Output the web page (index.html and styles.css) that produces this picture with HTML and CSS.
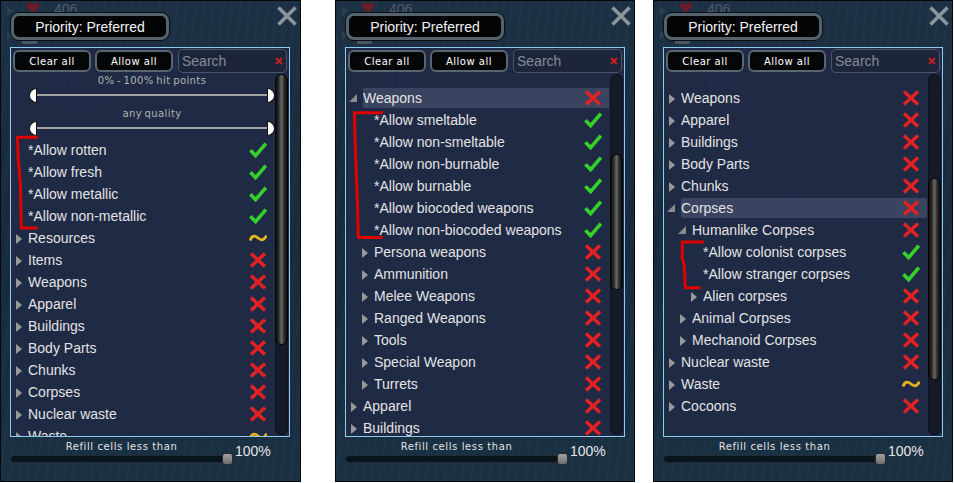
FILE: index.html
```html
<!DOCTYPE html>
<html lang="en">
<head>
<meta charset="utf-8">
<title>Storage filter</title>
<link rel="stylesheet" href="styles.css">
</head>
<body>
<svg class="defs" aria-hidden="true">
  <symbol id="ok" viewBox="0 0 18 16"><path d="M1.4 8.2 L6.6 13.6 L16.8 1.6" fill="none" stroke="#36d02c" stroke-width="3.6"/></symbol>
  <symbol id="no" viewBox="0 0 18 16"><path d="M2 1.5 L16 14.5 M16 1.5 L2 14.5" fill="none" stroke="#e22222" stroke-width="3.5"/></symbol>
  <symbol id="some" viewBox="0 0 18 16"><path d="M1 10.5 C3 5, 6 5.5, 9 8 S15 11, 17.5 5.5" fill="none" stroke="#e4b31e" stroke-width="2.8"/></symbol>
  <symbol id="closex" viewBox="0 0 20 20"><path d="M1.5 1.5 L18.5 18.5 M18.5 1.5 L1.5 18.5" fill="none" stroke="#8c949c" stroke-width="3.6"/></symbol>
  <symbol id="clr" viewBox="0 0 8 8"><path d="M1 1 L7 7 M7 1 L1 7" fill="none" stroke="#c51f1f" stroke-width="2"/></symbol>
  <symbol id="heart" viewBox="0 0 14 12"><path d="M7 11 L1.5 5.5 C-0.5 3 1.5 0 4 0.5 C5.5 0.8 6.5 2 7 3 C7.5 2 8.5 0.8 10 0.5 C12.5 0 14.5 3 12.5 5.5 Z" fill="#6b1c27"/></symbol>
</svg>

<div class="sheet">

  <!-- Panel 1 -->
  <section class="panel panel-1">
    <div class="ghost">
      <span class="g-tri g-tri-a"></span><span class="g-tri g-tri-b"></span>
      <svg class="g-heart"><use href="#heart"/></svg>
      <span class="g-num g-406">406</span>
      <span class="g-bar"></span>
      <span class="g-num g-1183">1183</span>
      <span class="g-num g-2708">270813</span>
    </div>
    <div class="header">
      <div class="priority">Priority: Preferred</div>
      <svg class="close"><use href="#closex"/></svg>
    </div>
    <div class="list">
      <div class="toolbar">
        <div class="btn">Clear all</div>
        <div class="btn">Allow all</div>
        <div class="search"><span class="ph">Search</span><svg class="clr"><use href="#clr"/></svg></div>
      </div>
      <div class="main">
        <div class="items">
          <div class="filter">
            <div class="cap">0% - 100% hit points</div>
            <div class="range"><span class="knob l"></span><span class="rail"></span><span class="knob r"></span></div>
            <div class="cap cap-2">any quality</div>
            <div class="range"><span class="knob l"></span><span class="rail"></span><span class="knob r"></span></div>
          </div>
          <div class="rows rows-p1">
            <div class="row"><span class="tri"></span><span class="body"><span class="label">*Allow rotten</span><svg class="ico"><use href="#ok"/></svg></span></div>
            <div class="row"><span class="tri"></span><span class="body"><span class="label">*Allow fresh</span><svg class="ico"><use href="#ok"/></svg></span></div>
            <div class="row"><span class="tri"></span><span class="body"><span class="label">*Allow metallic</span><svg class="ico"><use href="#ok"/></svg></span></div>
            <div class="row"><span class="tri"></span><span class="body"><span class="label">*Allow non-metallic</span><svg class="ico"><use href="#ok"/></svg></span></div>
            <div class="row"><span class="tri r"></span><span class="body"><span class="label">Resources</span><svg class="ico"><use href="#some"/></svg></span></div>
            <div class="row"><span class="tri r"></span><span class="body"><span class="label">Items</span><svg class="ico"><use href="#no"/></svg></span></div>
            <div class="row"><span class="tri r"></span><span class="body"><span class="label">Weapons</span><svg class="ico"><use href="#no"/></svg></span></div>
            <div class="row"><span class="tri r"></span><span class="body"><span class="label">Apparel</span><svg class="ico"><use href="#no"/></svg></span></div>
            <div class="row"><span class="tri r"></span><span class="body"><span class="label">Buildings</span><svg class="ico"><use href="#no"/></svg></span></div>
            <div class="row"><span class="tri r"></span><span class="body"><span class="label">Body Parts</span><svg class="ico"><use href="#no"/></svg></span></div>
            <div class="row"><span class="tri r"></span><span class="body"><span class="label">Chunks</span><svg class="ico"><use href="#no"/></svg></span></div>
            <div class="row"><span class="tri r"></span><span class="body"><span class="label">Corpses</span><svg class="ico"><use href="#no"/></svg></span></div>
            <div class="row"><span class="tri r"></span><span class="body"><span class="label">Nuclear waste</span><svg class="ico"><use href="#no"/></svg></span></div>
            <div class="row"><span class="tri r"></span><span class="body"><span class="label">Waste</span><svg class="ico"><use href="#some"/></svg></span></div>
          </div>
        </div>
        <div class="scroll"><div class="thumb thumb-p1"></div></div>
      </div>
    </div>
    <div class="footer">
      <div class="refill">
        <div class="cap cap-refill">Refill cells less than</div>
        <div class="track"><span class="handle"></span></div>
      </div>
      <div class="pct">100%</div>
    </div>
    <svg class="mark" viewBox="0 0 301 482"><polyline points="38,136.5 17.5,136.5 18.5,160 20.5,184 21.5,228 38,228" /></svg>
  </section>

  <!-- Panel 2 -->
  <section class="panel panel-2">
    <div class="ghost">
      <span class="g-tri g-tri-a"></span><span class="g-tri g-tri-b"></span>
      <svg class="g-heart"><use href="#heart"/></svg>
      <span class="g-num g-406">406</span>
      <span class="g-bar"></span>
      <span class="g-num g-1183">1183</span>
      <span class="g-num g-2708">270813</span>
    </div>
    <div class="header">
      <div class="priority">Priority: Preferred</div>
      <svg class="close"><use href="#closex"/></svg>
    </div>
    <div class="list">
      <div class="toolbar">
        <div class="btn">Clear all</div>
        <div class="btn">Allow all</div>
        <div class="search"><span class="ph">Search</span><svg class="clr"><use href="#clr"/></svg></div>
      </div>
      <div class="main">
        <div class="items">
          <div class="rows rows-scrolled">
            <div class="row hl"><span class="tri d"></span><span class="body"><span class="label">Weapons</span><svg class="ico"><use href="#no"/></svg></span></div>
            <div class="row d1"><span class="tri"></span><span class="body"><span class="label">*Allow smeltable</span><svg class="ico"><use href="#ok"/></svg></span></div>
            <div class="row d1"><span class="tri"></span><span class="body"><span class="label">*Allow non-smeltable</span><svg class="ico"><use href="#ok"/></svg></span></div>
            <div class="row d1"><span class="tri"></span><span class="body"><span class="label">*Allow non-burnable</span><svg class="ico"><use href="#ok"/></svg></span></div>
            <div class="row d1"><span class="tri"></span><span class="body"><span class="label">*Allow burnable</span><svg class="ico"><use href="#ok"/></svg></span></div>
            <div class="row d1"><span class="tri"></span><span class="body"><span class="label">*Allow biocoded weapons</span><svg class="ico"><use href="#ok"/></svg></span></div>
            <div class="row d1"><span class="tri"></span><span class="body"><span class="label">*Allow non-biocoded weapons</span><svg class="ico"><use href="#ok"/></svg></span></div>
            <div class="row d1"><span class="tri r"></span><span class="body"><span class="label">Persona weapons</span><svg class="ico"><use href="#no"/></svg></span></div>
            <div class="row d1"><span class="tri r"></span><span class="body"><span class="label">Ammunition</span><svg class="ico"><use href="#no"/></svg></span></div>
            <div class="row d1"><span class="tri r"></span><span class="body"><span class="label">Melee Weapons</span><svg class="ico"><use href="#no"/></svg></span></div>
            <div class="row d1"><span class="tri r"></span><span class="body"><span class="label">Ranged Weapons</span><svg class="ico"><use href="#no"/></svg></span></div>
            <div class="row d1"><span class="tri r"></span><span class="body"><span class="label">Tools</span><svg class="ico"><use href="#no"/></svg></span></div>
            <div class="row d1"><span class="tri r"></span><span class="body"><span class="label">Special Weapon</span><svg class="ico"><use href="#no"/></svg></span></div>
            <div class="row d1"><span class="tri r"></span><span class="body"><span class="label">Turrets</span><svg class="ico"><use href="#no"/></svg></span></div>
            <div class="row"><span class="tri r"></span><span class="body"><span class="label">Apparel</span><svg class="ico"><use href="#no"/></svg></span></div>
            <div class="row"><span class="tri r"></span><span class="body"><span class="label">Buildings</span><svg class="ico"><use href="#no"/></svg></span></div>
          </div>
        </div>
        <div class="scroll"><div class="thumb thumb-p2"></div></div>
      </div>
    </div>
    <div class="footer">
      <div class="refill">
        <div class="cap cap-refill">Refill cells less than</div>
        <div class="track"><span class="handle"></span></div>
      </div>
      <div class="pct">100%</div>
    </div>
    <svg class="mark" viewBox="0 0 300 482"><polyline points="48,112 19.5,112 20.5,150 22.5,200 23.5,237.5 48,237.5" /></svg>
  </section>

  <!-- Panel 3 -->
  <section class="panel panel-3">
    <div class="ghost">
      <span class="g-tri g-tri-a"></span><span class="g-tri g-tri-b"></span>
      <svg class="g-heart"><use href="#heart"/></svg>
      <span class="g-num g-406">406</span>
      <span class="g-bar"></span>
      <span class="g-num g-1183">1183</span>
      <span class="g-num g-2708">270813</span>
    </div>
    <div class="header">
      <div class="priority">Priority: Preferred</div>
      <svg class="close"><use href="#closex"/></svg>
    </div>
    <div class="list">
      <div class="toolbar">
        <div class="btn">Clear all</div>
        <div class="btn">Allow all</div>
        <div class="search"><span class="ph">Search</span><svg class="clr"><use href="#clr"/></svg></div>
      </div>
      <div class="main">
        <div class="items">
          <div class="rows rows-scrolled">
            <div class="row"><span class="tri r"></span><span class="body"><span class="label">Weapons</span><svg class="ico"><use href="#no"/></svg></span></div>
            <div class="row"><span class="tri r"></span><span class="body"><span class="label">Apparel</span><svg class="ico"><use href="#no"/></svg></span></div>
            <div class="row"><span class="tri r"></span><span class="body"><span class="label">Buildings</span><svg class="ico"><use href="#no"/></svg></span></div>
            <div class="row"><span class="tri r"></span><span class="body"><span class="label">Body Parts</span><svg class="ico"><use href="#no"/></svg></span></div>
            <div class="row"><span class="tri r"></span><span class="body"><span class="label">Chunks</span><svg class="ico"><use href="#no"/></svg></span></div>
            <div class="row hl"><span class="tri d"></span><span class="body"><span class="label">Corpses</span><svg class="ico"><use href="#no"/></svg></span></div>
            <div class="row d1"><span class="tri d"></span><span class="body"><span class="label">Humanlike Corpses</span><svg class="ico"><use href="#no"/></svg></span></div>
            <div class="row d2"><span class="tri"></span><span class="body"><span class="label">*Allow colonist corpses</span><svg class="ico"><use href="#ok"/></svg></span></div>
            <div class="row d2"><span class="tri"></span><span class="body"><span class="label">*Allow stranger corpses</span><svg class="ico"><use href="#ok"/></svg></span></div>
            <div class="row d2"><span class="tri r"></span><span class="body"><span class="label">Alien corpses</span><svg class="ico"><use href="#no"/></svg></span></div>
            <div class="row d1"><span class="tri r"></span><span class="body"><span class="label">Animal Corpses</span><svg class="ico"><use href="#no"/></svg></span></div>
            <div class="row d1"><span class="tri r"></span><span class="body"><span class="label">Mechanoid Corpses</span><svg class="ico"><use href="#no"/></svg></span></div>
            <div class="row"><span class="tri r"></span><span class="body"><span class="label">Nuclear waste</span><svg class="ico"><use href="#no"/></svg></span></div>
            <div class="row"><span class="tri r"></span><span class="body"><span class="label">Waste</span><svg class="ico"><use href="#some"/></svg></span></div>
            <div class="row"><span class="tri r"></span><span class="body"><span class="label">Cocoons</span><svg class="ico"><use href="#no"/></svg></span></div>
          </div>
        </div>
        <div class="scroll"><div class="thumb thumb-p3"></div></div>
      </div>
    </div>
    <div class="footer">
      <div class="refill">
        <div class="cap cap-refill">Refill cells less than</div>
        <div class="track"><span class="handle"></span></div>
      </div>
      <div class="pct">100%</div>
    </div>
    <svg class="mark" viewBox="0 0 300 482"><polyline points="51,242 29.5,242 29.5,258 31.5,266 32.5,288 48,288" /></svg>
  </section>

</div>
</body>
</html>
```

FILE: styles.css
```css
* { box-sizing: border-box; }

html, body {
  margin: 0;
  padding: 0;
  background: #ffffff;
}

body {
  width: 954px;
  height: 483px;
  overflow: hidden;
  font-family: "Liberation Sans", Arial, sans-serif;
}

.defs {
  position: absolute;
  width: 0;
  height: 0;
  overflow: hidden;
}

.sheet {
  display: flex;
  align-items: flex-start;
}

/* ---------- panel ---------- */
.panel {
  position: relative;
  width: 301px;
  height: 482px;
  border: 1px solid #06090c;
  padding: 0 9px;
  display: flex;
  flex-direction: column;
  overflow: hidden;
  background-color: #1b2f41;
  background-image:
    repeating-linear-gradient(96deg, rgba(0,0,0,0.07) 0 1px, rgba(0,0,0,0) 1px 4px, rgba(255,255,255,0.025) 4px 5px, rgba(0,0,0,0) 5px 9px),
    linear-gradient(180deg, #1d3146 0%, #192b3c 45%, #1a3144 100%);
}

.panel-2 { width: 300px; margin-left: 34px; }
.panel-3 { width: 300px; margin-left: 18px; }

/* ghost UI behind the window */
.ghost {
  position: absolute;
  inset: 0;
  z-index: 0;
}
.g-num {
  position: absolute;
  font-size: 14px;
  line-height: 16px;
  color: #4f5b68;
}
.g-406 { left: 53px; top: 0; }
.g-1183 { left: 53px; top: 72px; color: #5f6d8c; }
.g-2708 { left: 53px; top: 94px; color: #5f6d8c; }
.g-heart {
  position: absolute;
  left: 25px;
  top: 1px;
  width: 14px;
  height: 12px;
}
.g-bar {
  position: absolute;
  left: 21px;
  top: 39px;
  width: 15px;
  height: 4px;
  border-radius: 1px;
  background: #4a5661;
}
.g-tri {
  position: absolute;
  left: 6px;
  width: 0;
  height: 0;
  border-left: 6px solid #2a3f52;
  border-top: 5px solid transparent;
  border-bottom: 5px solid transparent;
}
.g-tri-a { top: 5px; }
.g-tri-b { top: 29px; }

/* ---------- header ---------- */
.header {
  position: relative;
  z-index: 1;
  height: 46px;
  display: flex;
  align-items: flex-start;
  flex: none;
}

.priority {
  margin: 12px 0 0 1px;
  width: 158px;
  height: 27px;
  border: 3px solid #55646c;
  border-radius: 8px;
  background: #040506;
  box-shadow: 0 0 0 1px #0a1016;
  color: #f2f2f2;
  font-size: 14px;
  display: flex;
  align-items: center;
  justify-content: center;
}

.close {
  margin: 5px -6px 0 auto;
  width: 20px;
  height: 20px;
  flex: none;
}

/* ---------- list box ---------- */
.list {
  position: relative;
  z-index: 1;
  width: 280px;
  height: 390px;
  flex: none;
  border: 1px solid #8ecbf0;
  background: rgba(32, 42, 70, 0.93);
  display: flex;
  flex-direction: column;
}

.toolbar {
  height: 26px;
  flex: none;
  display: flex;
  align-items: center;
  gap: 4px;
  padding-left: 2px;
}

.btn {
  width: 78px;
  height: 22px;
  border: 2px solid #57666f;
  border-radius: 6px;
  background: #050607;
  color: #ffffff;
  font-family: "DejaVu Sans", sans-serif;
  font-size: 10px;
  letter-spacing: 0.5px;
  display: flex;
  align-items: center;
  justify-content: center;
}

.search {
  margin-left: 1px;
  width: 109px;
  height: 24px;
  border: 1px solid #4b566b;
  border-radius: 5px;
  background: #1d253b;
  display: flex;
  align-items: center;
  justify-content: space-between;
  padding: 0 3px 0 3px;
}
.ph {
  color: #868b95;
  font-size: 14px;
}
.clr {
  width: 8px;
  height: 8px;
}

.main {
  flex: 1;
  min-height: 0;
  display: flex;
}

.items {
  width: 264px;
  flex: none;
  overflow: hidden;
}

.scroll {
  width: 13px;
  margin: 0 1px 1px 0;
  border-radius: 7px;
  background: #151a28;
  box-shadow: inset 0 0 0 1px #0f1320;
  display: flex;
  flex-direction: column;
}
.thumb {
  border-radius: 7px;
  border: 1px solid #050505;
  background: linear-gradient(90deg, #0d0d0d 0%, #2b2b2b 25%, #686868 50%, #2b2b2b 75%, #0d0d0d 100%);
}
.thumb-p1 { margin-top: 0; height: 271px; }
.thumb-p2 { margin-top: 80px; height: 136px; }
.thumb-p3 { margin-top: 104px; height: 202px; }

/* range filters */
.filter {
  margin-left: 18px;
  width: 246px;
}
.cap {
  height: 14px;
  line-height: 14px;
  text-align: center;
  font-family: "DejaVu Sans", sans-serif;
  font-size: 10px;
  letter-spacing: 0.4px;
  word-spacing: -1px;
  color: #b2b2b2;
  white-space: nowrap;
}
.cap-2 { margin-top: 5px; }
.range {
  height: 14px;
  display: flex;
  align-items: center;
}
.knob {
  width: 8px;
  height: 15px;
  flex: none;
  background: #ffffff;
  border: 1px solid #111111;
}
.knob.l { border-radius: 8px 0 0 8px; }
.knob.r { border-radius: 0 8px 8px 0; }
.rail {
  flex: 1;
  height: 2px;
  background: #a3a3a3;
}

/* rows */
.rows-p1 { margin-top: 4px; }
.rows-scrolled { margin-top: 13px; }

.row {
  height: 22px;
  display: flex;
  align-items: center;
  padding-left: 3px;
}
.row.d1 { padding-left: 14px; }
.row.d2 { padding-left: 25px; }

.tri {
  width: 8px;
  height: 10px;
  margin-right: 6px;
  flex: none;
  display: flex;
  justify-content: flex-end;
  align-items: center;
}
.tri.r::after {
  content: "";
  width: 0;
  height: 0;
  margin-top: 1px;
  border-left: 6px solid #999999;
  border-top: 5px solid transparent;
  border-bottom: 5px solid transparent;
}
.tri.d::after {
  content: "";
  width: 0;
  height: 0;
  border-bottom: 8px solid #8a8a8a;
  border-left: 8px solid transparent;
}

.body {
  flex: 1;
  min-width: 0;
  height: 20px;
  margin-right: 1px;
  padding-right: 7px;
  display: flex;
  align-items: center;
}
.row.hl .body { background: #3a4461; }

.label {
  flex: 1;
  min-width: 0;
  color: #e3e3e3;
  font-size: 14px;
  white-space: nowrap;
  overflow: hidden;
}

.ico {
  width: 18px;
  height: 16px;
  flex: none;
}

/* ---------- footer ---------- */
.footer {
  position: relative;
  z-index: 1;
  margin-top: 3px;
  display: flex;
  align-items: center;
}
.refill { width: 223px; flex: none; }
.cap-refill {
  height: 14px;
  line-height: 14px;
  color: #e2e2e2;
  letter-spacing: 0.6px;
  word-spacing: 0;
}
.track {
  position: relative;
  margin-top: 1px;
  width: 222px;
  height: 8px;
  border-radius: 4px;
  background: #09131b;
  border: 1px solid #1e2d39;
}
.handle {
  position: absolute;
  right: -2px;
  top: -3px;
  width: 11px;
  height: 12px;
  border-radius: 3px;
  border: 1px solid #2a2a2a;
  background: linear-gradient(180deg, #a2a2a2, #6d6d6d);
}
.pct {
  margin-left: 2px;
  margin-bottom: 2px;
  color: #e6e6e6;
  font-size: 14px;
}

/* ---------- hand drawn annotation ---------- */
.mark {
  position: absolute;
  left: -1px;
  top: -1px;
  width: 100%;
  height: 482px;
  z-index: 5;
  pointer-events: none;
  overflow: visible;
}
.mark polyline {
  fill: none;
  stroke: #e10000;
  stroke-width: 3;
  stroke-linejoin: round;
}
```
